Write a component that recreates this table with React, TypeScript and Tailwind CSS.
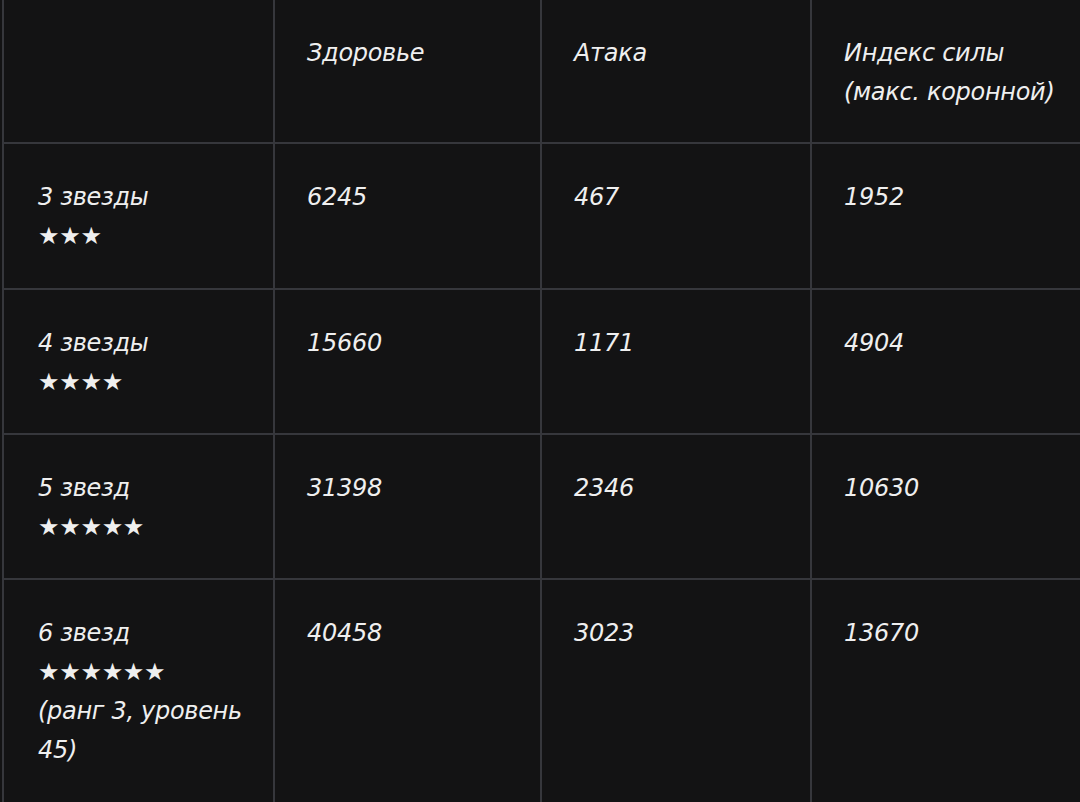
import React from "react";

const rows: { label: React.ReactNode[]; vals: string[]; h: string }[] = [
  { label: ["3 звезды", "★★★"], vals: ["6245", "467", "1952"], h: "h-[146px]" },
  { label: ["4 звезды", "★★★★"], vals: ["15660", "1171", "4904"], h: "h-[145px]" },
  { label: ["5 звезд", "★★★★★"], vals: ["31398", "2346", "10630"], h: "h-[145px]" },
  {
    label: ["6 звезд", "★★★★★★", "(ранг 3, уровень", "45)"],
    vals: ["40458", "3023", "13670"],
    h: "h-[240px]",
  },
];

function Cell({ children, h, first }: { children?: React.ReactNode; h: string; first?: boolean }) {
  return (
    <div
      className={`${h} border-b-2 border-l-2 border-[#36373c] pt-[34px] ${first ? "pl-[34px]" : "pl-[32px]"} pr-2`}
    >
      {children}
    </div>
  );
}

export default function App() {
  return (
    <div
      className="w-[1080px] h-[802px] overflow-hidden bg-[#131314] text-[#efefef] italic text-[24px] leading-[39px] tracking-[-0.3px]"
      style={{ fontFamily: '"DejaVu Sans", "Liberation Sans", sans-serif' }}
    >
      <div className="ml-[2px] grid grid-cols-[271px_267px_270px_300px]">
        <Cell h="h-[144px]" first />
        <Cell h="h-[144px]">Здоровье</Cell>
        <Cell h="h-[144px]">Атака</Cell>
        <Cell h="h-[144px]">
          <div>Индекс силы</div>
          <div>(макс. коронной)</div>
        </Cell>
        {rows.map((r, i) => (
          <React.Fragment key={i}>
            <Cell h={r.h} first>
              {r.label.map((l, j) => (
                <div key={j} className="whitespace-nowrap">
                  {l}
                </div>
              ))}
            </Cell>
            {r.vals.map((v, j) => (
              <Cell key={j} h={r.h}>
                {v}
              </Cell>
            ))}
          </React.Fragment>
        ))}
      </div>
    </div>
  );
}
